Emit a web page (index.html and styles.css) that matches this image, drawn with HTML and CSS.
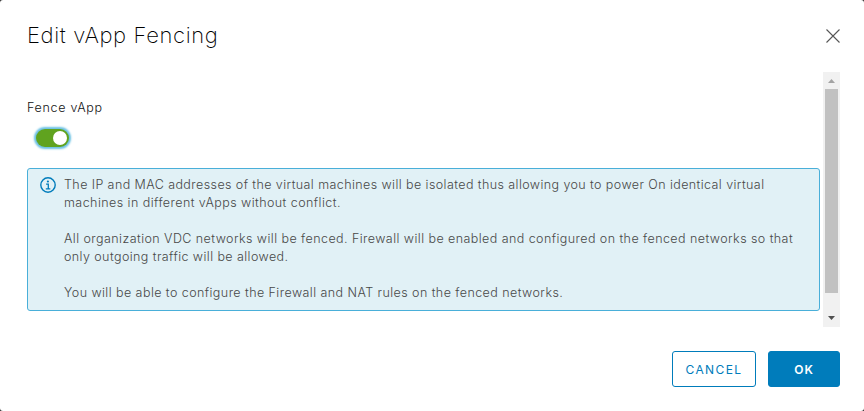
FILE: index.html
```html
<!DOCTYPE html>
<html lang="en">
<head>
<meta charset="utf-8">
<title>Edit vApp Fencing</title>
<link rel="stylesheet" href="styles.css">
</head>
<body>
<main class="modal" role="dialog" aria-labelledby="title">
  <header class="modal-header">
    <h1 class="modal-title" id="title">Edit vApp Fencing</h1>
    <button class="close" aria-label="Close">
      <svg width="14" height="14" viewBox="0 0 14 14"><path d="M.5.5l13 13M13.5.5l-13 13" fill="none" stroke="#565656" stroke-width="1.1"/></svg>
    </button>
  </header>
  <div class="modal-body">
    <div class="content">
      <div class="label">Fence vApp</div>
      <button class="toggle" role="switch" aria-checked="true" aria-label="Fence vApp"><span class="knob"></span></button>
      <div class="alert">
        <svg class="info" width="16" height="16" viewBox="0 0 16 16"><circle cx="8" cy="8" r="7.2" fill="none" stroke="#007cbb" stroke-width="1.4"/><circle cx="7.9" cy="4.5" r="1.1" fill="#007cbb"/><path d="M6.1 7.2h2.2v4.4M5.8 11.8h4.5" fill="none" stroke="#007cbb" stroke-width="1.3"/></svg>
        <div class="message">
          <p><span class="l1">The IP and MAC addresses of the virtual machines will be isolated thus allowing you to power On identical virtual</span><br><span class="l2">machines in different vApps without conflict.</span></p>
          <p><span class="l3">All organization VDC networks will be fenced. Firewall will be enabled and configured on the fenced networks so that</span><br><span class="l4">only outgoing traffic will be allowed.</span></p>
          <p><span class="l5">You will be able to configure the Firewall and NAT rules on the fenced networks.</span></p>
        </div>
      </div>
    </div>
    <div class="scrollbar">
      <svg class="arrow" width="17" height="17" viewBox="0 0 17 17"><path d="M5 11h7L8.5 7z" fill="#a3a3a3"/></svg>
      <div class="thumb"></div>
      <svg class="arrow" width="17" height="17" viewBox="0 0 17 17"><path d="M5 6h7L8.5 10z" fill="#505050"/></svg>
    </div>
  </div>
  <footer class="modal-footer">
    <button class="btn cancel">CANCEL</button>
    <button class="btn ok">OK</button>
  </footer>
</main>
</body>
</html>
```
FILE: styles.css
```css
* { box-sizing: border-box; }
body {
  margin: 0;
  background: #313131;
  font-family: Inter, "Liberation Sans", sans-serif;
  overflow: hidden;
}
button { font-family: inherit; padding: 0; border: 0; background: none; }
.modal {
  width: 864px;
  height: 411px;
  padding: 0 24px 0 27px;
  background: #fff;
  border-radius: 3px;
}
.modal-header {
  display: flex;
  justify-content: space-between;
  height: 72px;
}
.modal-title {
  margin: 21px 0 0;
  font-size: 22px;
  line-height: 28px;
  font-weight: 200;
  letter-spacing: 0.63px;
  color: #000;
}
.close { width: 14px; height: 14px; margin-top: 29px; }
.close svg { display: block; }
.modal-body { display: flex; height: 255px; gap: 3px; }
.content { width: 793px; padding-top: 27px; }
.label {
  font-size: 12.5px;
  font-weight: 300;
  line-height: 18px;
  letter-spacing: 0.7px;
  color: #111;
}
.toggle {
  display: flex;
  align-items: center;
  justify-content: flex-end;
  width: 33px;
  height: 18px;
  margin: 12px 0 0 9px;
  padding-right: 2px;
  border-radius: 9px;
  background: #60a31f;
  box-shadow: 0 0 2px 2px #6bc1e3;
}
.knob { width: 14px; height: 14px; border-radius: 50%; background: #fff; }
.alert {
  display: flex;
  height: 143px;
  margin-top: 21px;
  padding: 7px 12px;
  border: 1px solid #49afd9;
  border-radius: 3px;
  background: #e1f1f6;
}
.info { flex: none; margin: 1px 8px 0 0; }
.message { font-size: 12.5px; font-weight: 300; line-height: 18px; color: #484848; white-space: nowrap; }
.message p { margin: 0 0 18px; }
.l1 { letter-spacing: 0.416px; }
.l2 { letter-spacing: 0.44px; }
.l3 { letter-spacing: 0.433px; }
.l4 { letter-spacing: 0.42px; }
.l5 { letter-spacing: 0.435px; }
.scrollbar { width: 17px; background: #f1f1f1; }
.arrow { display: block; }
.thumb { width: 13px; height: 204px; margin: 0 2px 17px; background: #c1c1c1; }
.modal-footer { display: flex; justify-content: flex-end; gap: 12px; padding-top: 24px; }
.btn {
  height: 36px;
  border: 1px solid #007cbb;
  border-radius: 3px;
  font-size: 12px;
  letter-spacing: 1.4px;
}
.cancel { width: 84px; color: #007cbb; }
.ok { width: 72px; background: #007cbb; color: #fff; font-weight: 600; letter-spacing: 1px; }
```
